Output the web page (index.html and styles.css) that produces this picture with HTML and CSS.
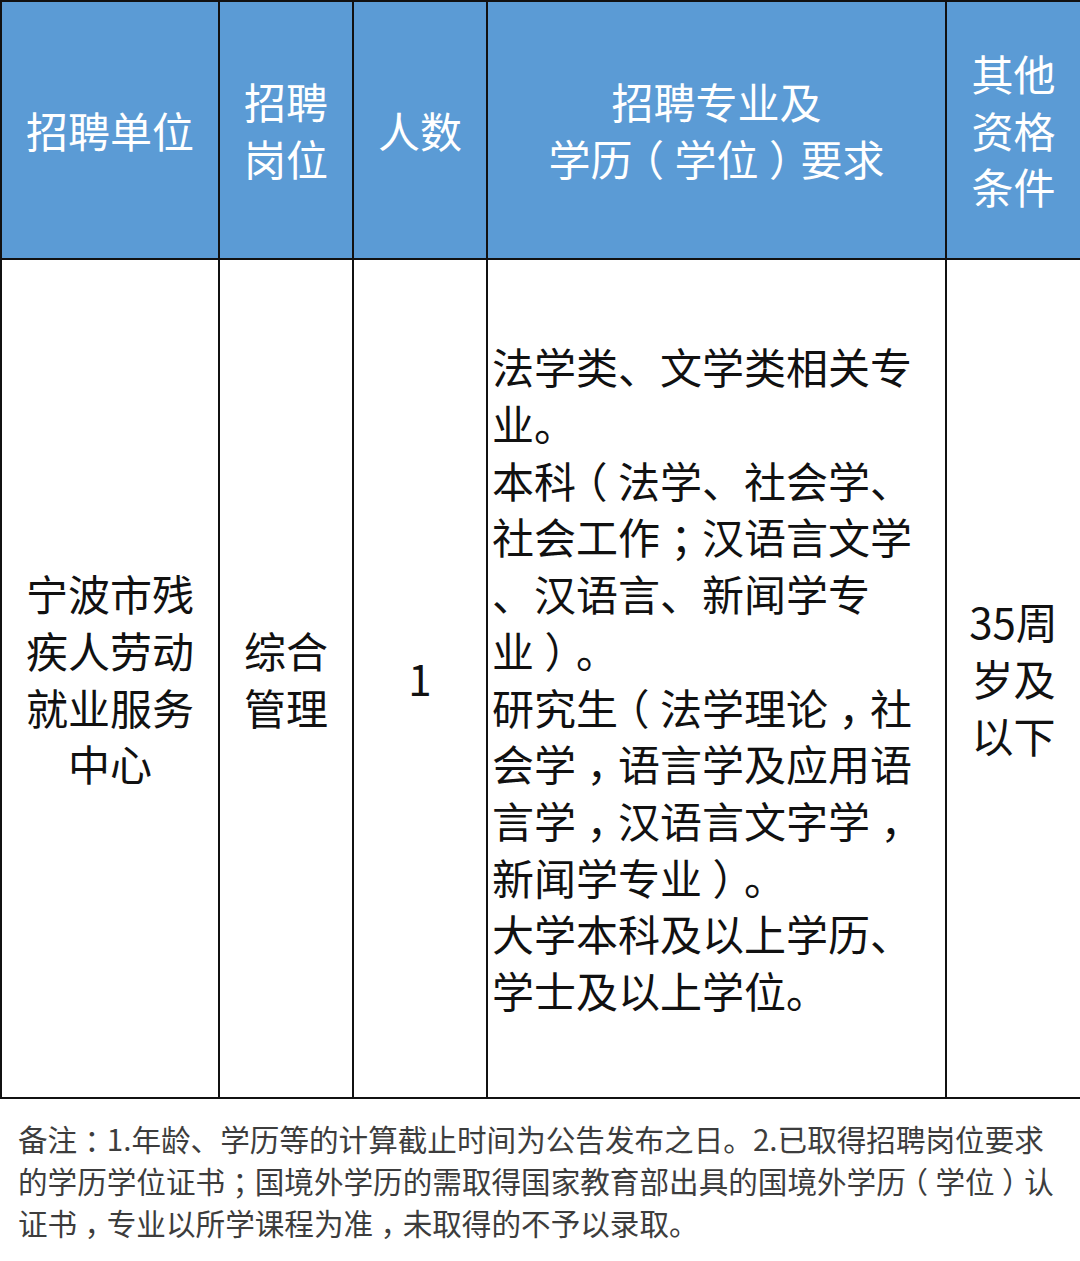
FILE: index.html
```html
<!DOCTYPE html>
<html lang="zh-CN">
<head>
<meta charset="utf-8">
<title>招聘岗位</title>
<link rel="stylesheet" href="styles.css">
</head>
<body>
<table class="jobs">
  <colgroup>
    <col class="c1"><col class="c2"><col class="c3"><col class="c4"><col class="c5">
  </colgroup>
  <thead>
    <tr class="head-row">
      <th>招聘单位</th>
      <th>招聘<br>岗位</th>
      <th>人数</th>
      <th>招聘专业及<br>学历<span class="p">（</span>学位<span class="p">）</span>要求</th>
      <th>其他<br>资格<br>条件</th>
    </tr>
  </thead>
  <tbody>
    <tr class="body-row">
      <td>宁波市残<br>疾人劳动<br>就业服务<br>中心</td>
      <td>综合<br>管理</td>
      <td>1</td>
      <td class="req">法学类、文学类相关专<br>业。<br>本科<span class="p">（</span>法学、社会学、<br>社会工作<span class="p">；</span>汉语言文学<br>、汉语言、新闻学专<br>业<span class="p">）</span>。<br>研究生<span class="p">（</span>法学理论<span class="p">，</span>社<br>会学<span class="p">，</span>语言学及应用语<br>言学<span class="p">，</span>汉语言文字学<span class="p">，</span><br>新闻学专业<span class="p">）</span>。<br>大学本科及以上学历、<br>学士及以上学位。</td>
      <td>35周<br>岁及<br>以下</td>
    </tr>
  </tbody>
</table>
<p class="note">备注<span class="p">：</span>1.年龄、学历等的计算截止时间为公告发布之日。2.已取得招聘岗位要求<br>的学历学位证书<span class="p">；</span>国境外学历的需取得国家教育部出具的国境外学历<span class="p">（</span>学位<span class="p">）</span>认<br>证书<span class="p">，</span>专业以所学课程为准<span class="p">，</span>未取得的不予以录取。</p>
</body>
</html>
```

FILE: styles.css
```css
html, body {
  margin: 0;
  padding: 0;
  background: #ffffff;
}
body {
  width: 1080px;
  font-family: "Noto Sans CJK SC", "Noto Sans", sans-serif;
}
.jobs {
  width: 1080px;
  border-collapse: collapse;
  table-layout: fixed;
}
.c1 { width: 218px; }
.c2 { width: 134px; }
.c3 { width: 134px; }
.c4 { width: 459px; }
.c5 { width: 135px; }
.jobs th, .jobs td {
  border: 2px solid #111111;
  padding: 0;
  font-size: 42px;
  line-height: 56.7px;
  font-weight: 400;
  text-align: center;
  vertical-align: middle;
  white-space: nowrap;
}
.jobs th {
  background: #5b9bd5;
  color: #ffffff;
}
.jobs td {
  color: #111111;
}
.head-row { height: 258px; }
.body-row { height: 839px; }
.jobs td.req {
  text-align: left;
  padding-left: 4px;
}
.p {
  font-feature-settings: "halt" 1;
  margin: 0 0.25em;
}
.note {
  margin: 19px 0 0 0;
  padding-left: 18px;
  font-size: 29.6px;
  line-height: 42px;
  color: #3d3d3d;
  white-space: nowrap;
}
```
